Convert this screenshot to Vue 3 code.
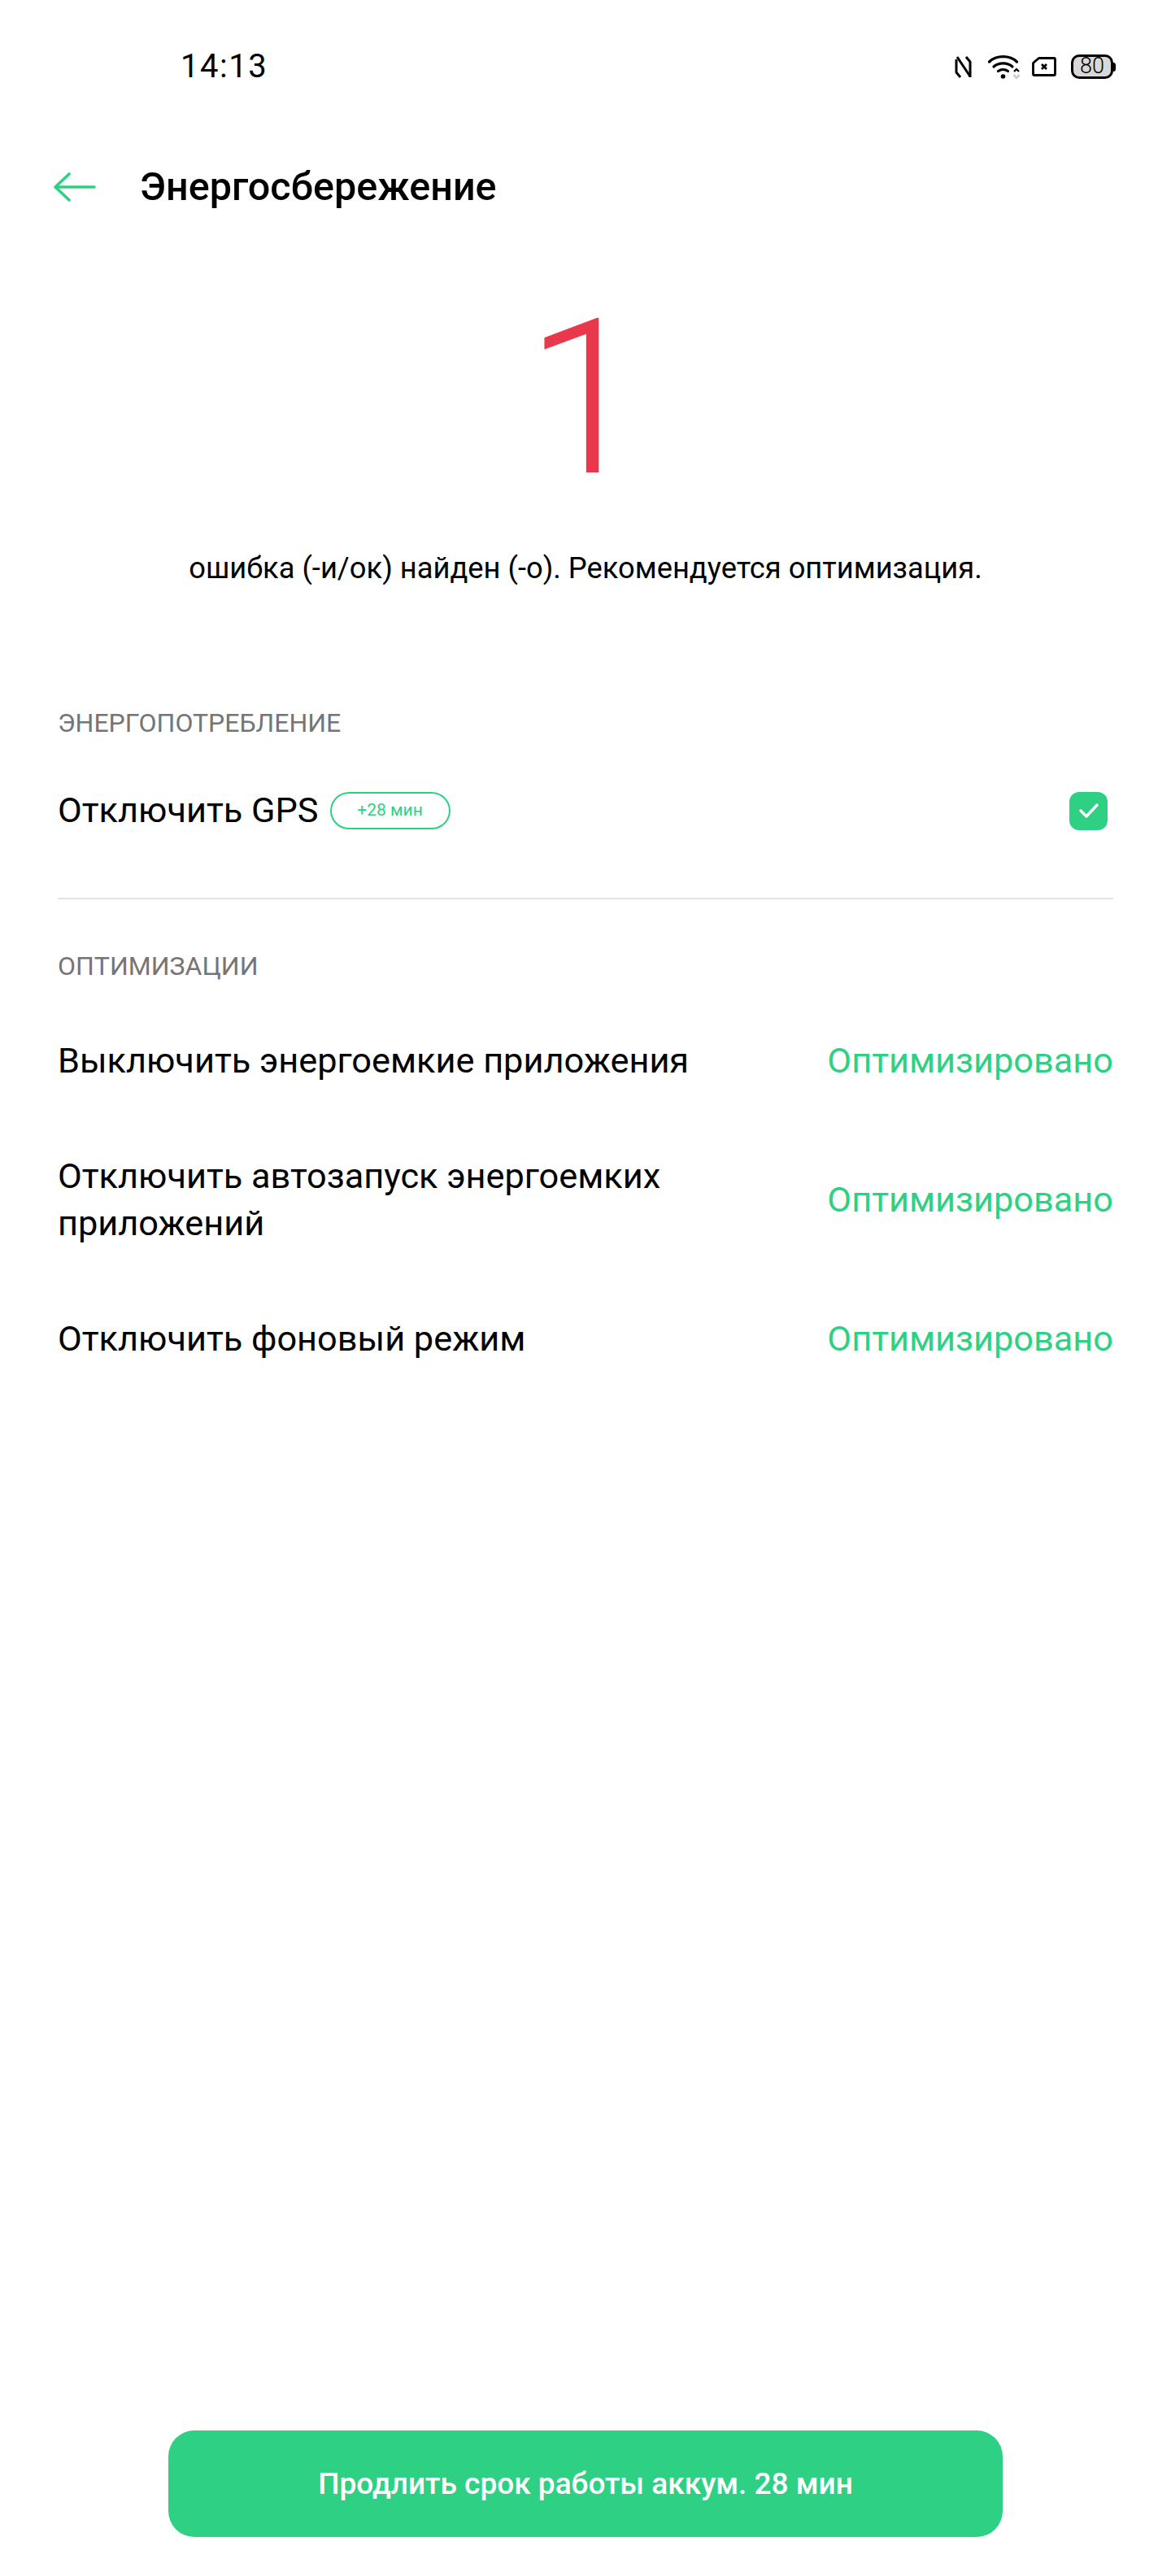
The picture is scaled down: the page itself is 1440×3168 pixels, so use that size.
<script setup>
const usageRows = [
  { label: 'Выключить энергоемкие приложения' },
  { label: 'Отключить автозапуск энергоемких приложений' },
  { label: 'Отключить фоновый режим' },
]
</script>

<template>
  <div class="screen">
    <div class="status-bar">
      <span class="time">14:13</span>
      <div class="status-icons">
        <svg width="21" height="27" viewBox="0 0 21 27" fill="none" stroke="#000" stroke-width="3" stroke-linejoin="round">
          <path d="M2 4 V20 L7 26" />
          <path d="M3 1 L19 25" />
          <path d="M14 1 L19 7 V26" />
        </svg>
        <svg class="wifi" width="40" height="29" viewBox="0 0 40 29" fill="none" stroke="#000" stroke-width="3.2" stroke-linecap="round">
          <path d="M1.5 8 C10 -0.5 27 -0.5 35.5 8" />
          <path d="M7 14 C13 8.500 24 8.500 30 14" />
          <path d="M12.500 19.500 C16 17 21 17 24.500 19.500" />
          <circle cx="18.500" cy="26" r="2.800" fill="#000" stroke="none" />
          <path d="M32 20 L35 17 L38 20" stroke-width="2.200" stroke-linecap="butt" />
          <path d="M31.500 24 L35 28 L38.500 24" stroke="#ccc" stroke-width="2.800" stroke-linecap="butt" />
        </svg>
        <svg class="sim" width="30" height="24" viewBox="0 0 30 24" fill="none" stroke="#000" stroke-width="2.800">
          <path d="M8.500 1.500 H27 Q28.500 1.500 28.500 3 V21 Q28.500 22.500 27 22.500 H3 Q1.500 22.500 1.500 21 V7.500 Z" stroke-linejoin="round" />
          <path d="M12 9 L18 15 M18 9 L12 15" />
        </svg>
        <div class="battery">
          <span class="battery-body">80</span>
          <span class="battery-tip"></span>
        </div>
      </div>
    </div>

    <header class="app-bar">
      <svg class="back" width="52" height="36" viewBox="0 0 52 36" fill="none" stroke="#2ed184" stroke-width="3.6" stroke-linecap="round" stroke-linejoin="round">
        <path d="M2 18 H50 M19 2 L2 18 L19 34" />
      </svg>
      <h1 class="title">Энергосбережение</h1>
    </header>

    <div class="summary">
      <div class="count">1</div>
      <p class="summary-text">ошибка (-и/ок) найден (-о). Рекомендуется оптимизация.</p>
    </div>

    <section class="group first">
      <h2 class="group-title">ЭНЕРГОПОТРЕБЛЕНИЕ</h2>
      <div class="gps-row">
        <div class="gps-left">
          <span class="row-label">Отключить GPS</span>
          <span class="pill">+28 мин</span>
        </div>
        <span class="checkbox">
          <svg width="26" height="22" viewBox="0 0 26 22" fill="none" stroke="#fff" stroke-width="3.4" stroke-linecap="round" stroke-linejoin="round">
            <path d="M3 11 L10 18 L23 4" />
          </svg>
        </span>
      </div>
    </section>

    <div class="divider"></div>

    <section class="group second">
      <h2 class="group-title">ОПТИМИЗАЦИИ</h2>
      <div v-for="row in usageRows" :key="row.label" class="opt-row">
        <span class="row-label opt-label">{{ row.label }}</span>
        <span class="opt-state">Оптимизировано</span>
      </div>
    </section>

    <div class="spacer"></div>

    <div class="footer">
      <button class="cta">Продлить срок работы аккум. 28 мин</button>
    </div>
  </div>
</template>

<style scoped>
.screen {
  width: 1440px;
  height: 3168px;
  display: flex;
  flex-direction: column;
  background: #fff;
  color: #000;
  font-family: Roboto, "Noto Sans", sans-serif;
}

.status-bar {
  height: 164px;
  padding: 0 68px 0 222px;
  display: flex;
  align-items: center;
  justify-content: space-between;
}

.time {
  font-size: 40px;
  line-height: 48px;
  letter-spacing: 1.5px;
}

.status-icons {
  display: flex;
  align-items: center;
  gap: 20px;
}

.status-icons .wifi {
  margin-right: -6px;
}

.status-icons .sim {
  margin-right: -2px;
}

.battery {
  display: flex;
  align-items: center;
}

.battery-body {
  width: 52px;
  height: 30px;
  box-sizing: border-box;
  border: 3.5px solid #000;
  border-radius: 10px;
  background: #d8d8d8;
  font-size: 27px;
  line-height: 23px;
  text-align: center;
  font-weight: 300;
}

.battery-tip {
  width: 3px;
  height: 11px;
  background: #000;
  border-radius: 0 3px 3px 0;
}

.app-bar {
  height: 76px;
  margin-top: 28px;
  padding-left: 66px;
  display: flex;
  align-items: center;
}

.back {
  flex: none;
}

.title {
  margin: 0 0 0 54px;
  font-size: 48.5px;
  line-height: 76px;
  font-weight: 500;
}

.summary {
  display: flex;
  flex-direction: column;
  align-items: center;
}

.count {
  margin-top: 66px;
  font-size: 266px;
  line-height: 312px;
  font-weight: 300;
  color: #e9374c;
}

.summary-text {
  margin: 29px 0 0;
  font-size: 36.3px;
  line-height: 48px;
}

.group {
  padding: 0 71px;
}

.group.first {
  margin-top: 146px;
}

.group-title {
  margin: 0;
  font-size: 32px;
  line-height: 40px;
  font-weight: 400;
  color: #757575;
}

.gps-row {
  height: 108px;
  margin-top: 34px;
  display: flex;
  align-items: center;
  justify-content: space-between;
}

.gps-left {
  display: flex;
  align-items: center;
  gap: 14px;
}

.row-label {
  font-size: 43.3px;
  line-height: 58px;
}

.pill {
  width: 148px;
  height: 46px;
  box-sizing: border-box;
  border: 2.5px solid #2ed184;
  border-radius: 23px;
  color: #2ed184;
  font-size: 21px;
  line-height: 41px;
  text-align: center;
}

.checkbox {
  width: 47px;
  height: 47px;
  margin-right: 7px;
  border-radius: 12px;
  background: #2ed184;
  display: flex;
  align-items: center;
  justify-content: center;
}

.divider {
  height: 2px;
  margin: 53px 71px 0;
  background: #e3e3e3;
}

.group.second {
  margin-top: 62px;
}

.second .group-title {
  margin-bottom: 26px;
}

.opt-row {
  padding: 42px 0;
  display: flex;
  align-items: center;
  justify-content: space-between;
  gap: 60px;
}

.opt-label {
  max-width: 800px;
}

.opt-state {
  flex: none;
  font-size: 43.3px;
  line-height: 58px;
  color: #2ed184;
}

.spacer {
  flex: 1;
}

.footer {
  display: flex;
  justify-content: center;
  padding-bottom: 48px;
}

.cta {
  width: 1026px;
  height: 131px;
  border: 0;
  border-radius: 32px;
  background: #2ed184;
  color: #fff;
  font-family: inherit;
  font-size: 37px;
  font-weight: 500;
}
</style>
